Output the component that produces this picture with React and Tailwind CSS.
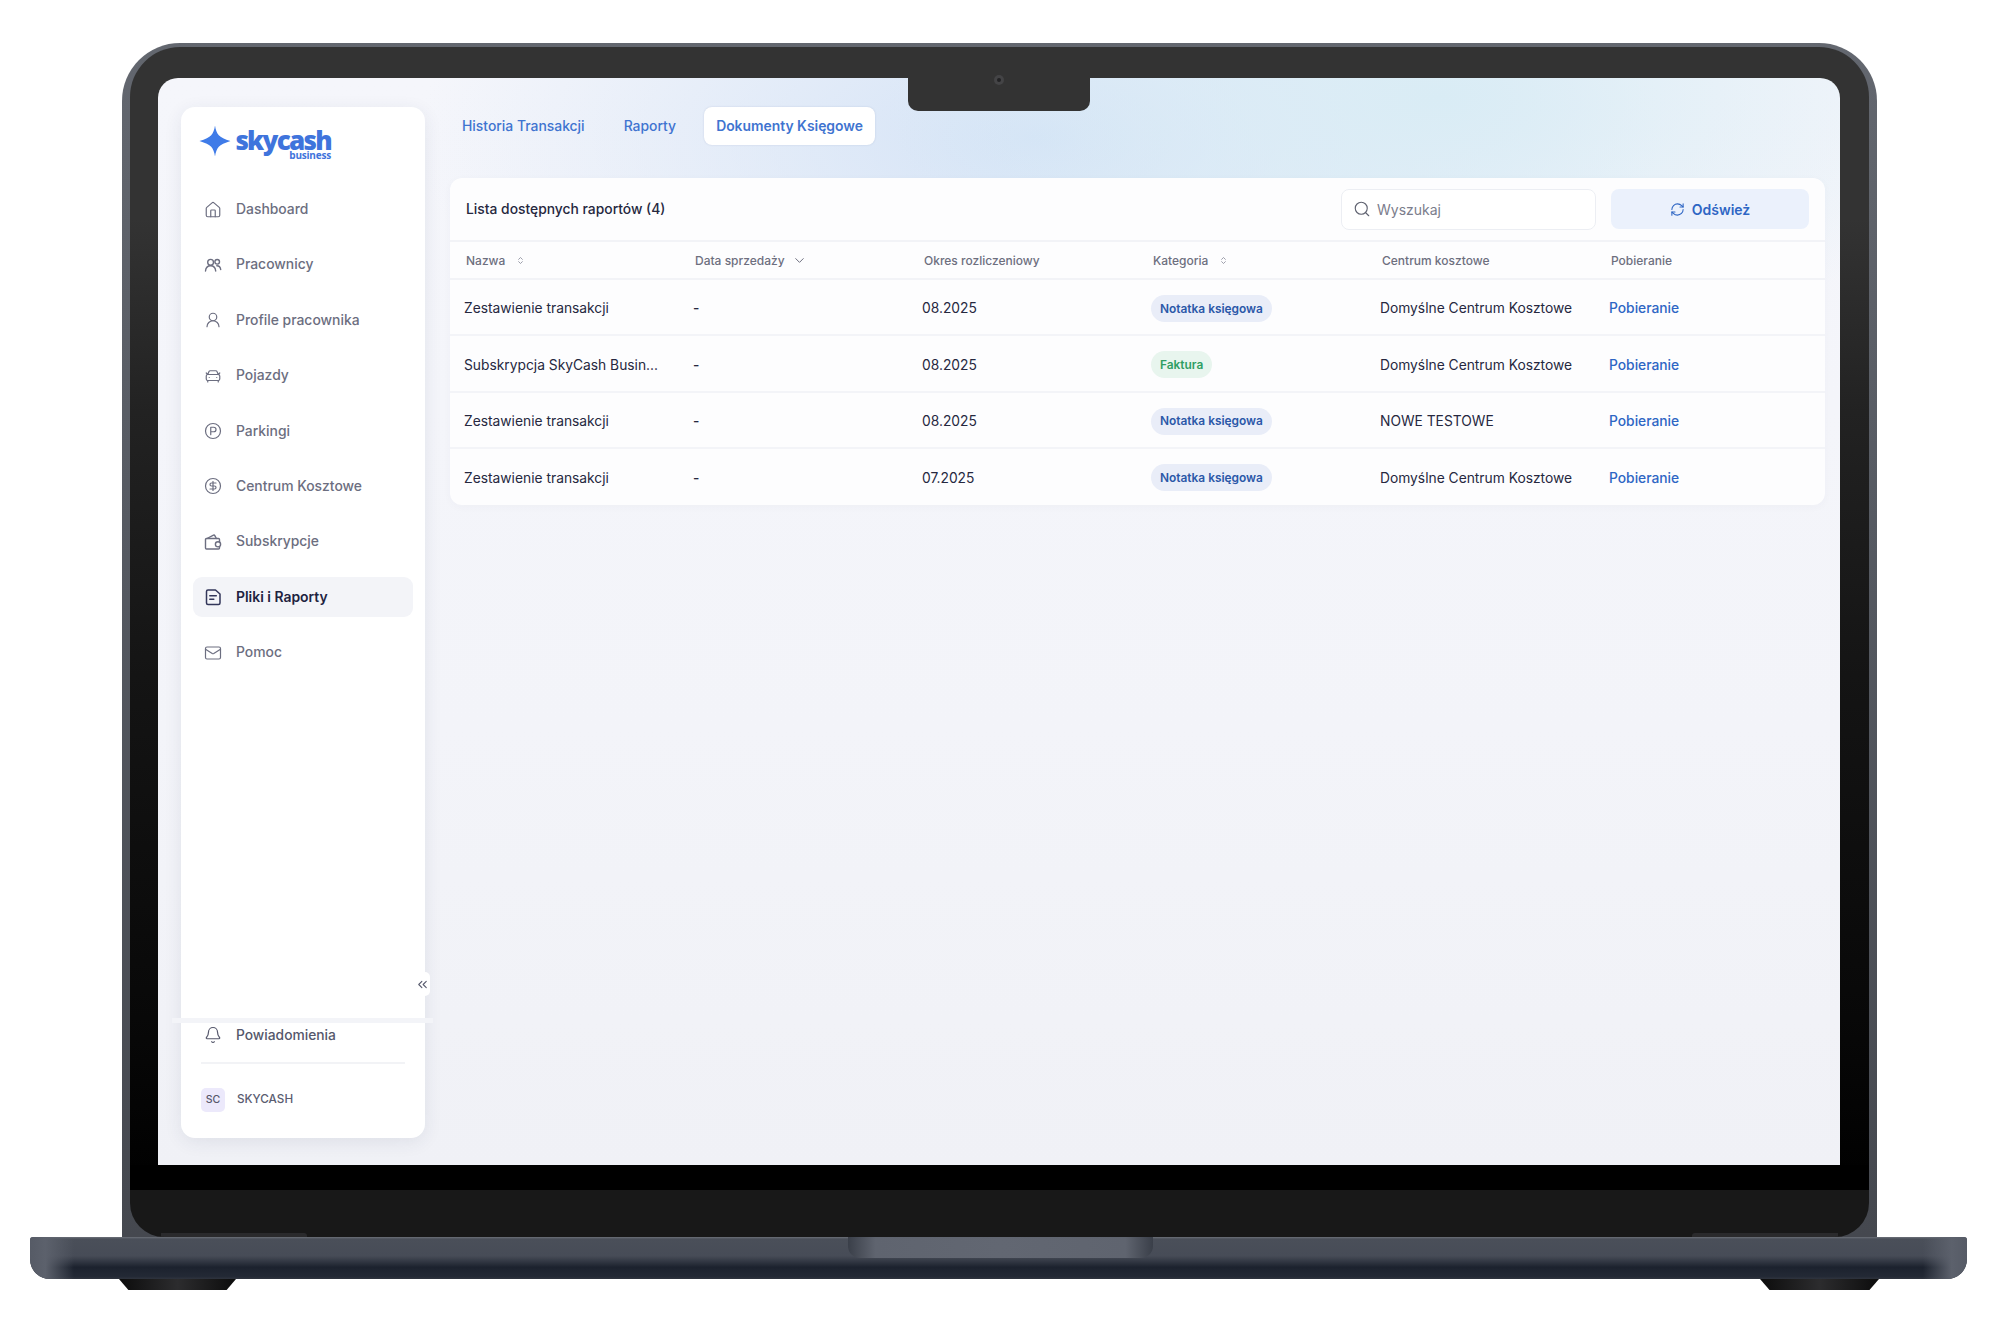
import React from "react";
import { House, UserRound, CarFront, CircleParking, CircleDollarSign, Mail, Bell, Search, RefreshCw, ChevronsUpDown, ChevronDown, ChevronsLeft } from "lucide-react";

const PeopleIcon = ({ className }) => (
  <svg viewBox="0 0 18 18" fill="none" stroke="currentColor" strokeWidth="1.4" strokeLinejoin="round" strokeLinecap="round" className={className}>
    <circle cx="6.600" cy="6.300" r="2.900" />
    <path d="M1.500 15c.3-3.300 2.300-5.300 5.100-5.300s4.800 2 5.100 5.300" />
    <circle cx="13.200" cy="5.800" r="2.300" />
    <path d="M12.800 9.700c2.200 0 3.600 1.500 3.900 3.800" />
  </svg>
);
const WalletIcon = ({ className }) => (
  <svg viewBox="0 0 18 18" fill="none" stroke="currentColor" strokeWidth="1.4" strokeLinejoin="round" strokeLinecap="round" className={className}>
    <path d="M15.500 9V6.500a1 1 0 0 0-1-1h-12a1 1 0 0 0-1 1v8.500a1 1 0 0 0 1 1h12a1 1 0 0 0 1-1v-1" />
    <path d="M3 5.500 9.500 2.200a1 1 0 0 1 1.300.4l1.600 2.900" />
    <circle cx="14" cy="11.300" r="2.600" />
  </svg>
);
const DocIcon = ({ className }) => (
  <svg viewBox="0 0 18 18" fill="none" stroke="currentColor" strokeWidth="1.5" strokeLinejoin="round" strokeLinecap="round" className={className}>
    <path d="M4 2h7.500L16 6v9a1.500 1.500 0 0 1-1.500 1.500h-10.500A1.500 1.500 0 0 1 2.500 15V3.500A1.500 1.500 0 0 1 4 2z" />
    <path d="M5.800 7.800h6.500M5.800 11.200h4" />
  </svg>
);

const nav = [
  ["Dashboard", House],
  ["Pracownicy", PeopleIcon],
  ["Profile pracownika", UserRound],
  ["Pojazdy", CarFront],
  ["Parkingi", CircleParking],
  ["Centrum Kosztowe", CircleDollarSign],
  ["Subskrypcje", WalletIcon],
  ["Pliki i Raporty", DocIcon, true],
  ["Pomoc", Mail],
];

const rows = [
  ["Zestawienie transakcji", "-", "08.2025", "n", "Domyślne Centrum Kosztowe"],
  ["Subskrypcja SkyCash Busin...", "-", "08.2025", "f", "Domyślne Centrum Kosztowe"],
  ["Zestawienie transakcji", "-", "08.2025", "n", "NOWE TESTOWE"],
  ["Zestawienie transakcji", "-", "07.2025", "n", "Domyślne Centrum Kosztowe"],
];

const Sort = () => <ChevronsUpDown className="w-[9px] h-[9px] text-[#7d8090] ml-[11px]" strokeWidth={2} />;

function Sidebar() {
  return (
    <aside className="relative w-[244px] h-[1031px] shrink-0 bg-white rounded-[14px] shadow-[0_4px_18px_rgba(40,50,90,0.09)] flex flex-col">
      <div className="h-[82.500px] pl-[19px] pt-[18px] flex items-start">
        <svg viewBox="0 0 32 32" className="w-[32px] h-[32px] -ml-[1px] text-[#3f7be8]" fill="currentColor">
          <path d="M16 0.500c.7 4.500 1.900 7.800 3.800 9.700C21.800 12.200 25.500 14.200 31.500 16c-6 1.800-9.700 3.800-11.700 5.800C17.900 23.700 16.700 27 16 31.500c-.7-4.500-1.900-7.800-3.800-9.700C10.200 19.800 6.500 17.800.5 16c6-1.800 9.700-3.800 11.700-5.800C14.100 8.300 15.300 5 16 .5z" />
        </svg>
        <div className="ml-[4px] w-[96px] flex flex-col items-end font-['Open_Sans',sans-serif] text-[#3f74dc]">
          <span className="text-[26px] leading-[20px] tracking-[-1.700px] mt-[5px] font-extrabold">skycash</span>
          <span className="text-[10px] leading-[6px] mt-[2px] tracking-[-0.2px] font-bold">business</span>
        </div>
      </div>
      <nav className="flex flex-col gap-[15.400px] px-[12px]">
        {nav.map(([label, Icon, active]) => (
          <div key={label} className={`h-[40px] pl-[11px] rounded-[9px] flex items-center ${active ? "bg-[#f3f4f8] text-[#20223f] font-semibold" : "text-[#6c6e80] font-medium"}`}>
            <Icon className={`w-[18px] h-[18px] shrink-0 ${active ? "text-[#33365a]" : "text-[#6c6e80]"}`} strokeWidth={1.6} />
            <span className="ml-[14px] text-[13.900px]">{label}</span>
          </div>
        ))}
      </nav>
      <button className="absolute left-[233px] top-[865px] w-[16px] h-[24px] bg-white rounded-r-[5px] flex items-center justify-center text-[#55586b]">
        <ChevronsLeft className="w-[15px] h-[15px]" strokeWidth={1.7} />
      </button>
      <div className="absolute -left-[9px] -right-[8px] top-[911px] h-[5px] bg-[#f3f4f8]" />
      <div className="mt-auto px-[20px] pb-[26px]">
        <div className="h-[42px] mb-[6px] pl-[3px] flex items-center text-[#55576b] font-medium">
          <Bell className="w-[18px] h-[18px] shrink-0" strokeWidth={1.6} />
          <span className="ml-[14px] text-[13.800px]">Powiadomienia</span>
        </div>
        <div className="h-[2px] bg-[#f2f3f6]" />
        <div className="mt-[24px] flex items-center">
          <div className="w-[24px] h-[24px] rounded-[5px] bg-[#ece9fb] flex items-center justify-center text-[10.500px] font-medium text-[#55576b]">SC</div>
          <span className="ml-[12px] text-[11.700px] font-medium text-[#5a5c70]">SKYCASH</span>
        </div>
      </div>
    </aside>
  );
}

function Table() {
  const cols = "grid grid-cols-[229px_229px_229px_229px_229px_1fr]";
  return (
    <section className="h-[327px] rounded-[12px] bg-[#fdfdfe] flex flex-col overflow-hidden shadow-[0_2px_8px_rgba(60,70,110,0.03)]">
      <div className="h-[64px] shrink-0 flex items-center pl-[16px] pr-[16px] border-b-[2px] border-[#f2f3f7]">
        <h2 className="pt-[1px] text-[13.850px] font-medium text-[#26283f]">Lista dostępnych raportów (4)</h2>
        <div className="ml-auto w-[255px] h-[41px] rounded-[8px] border border-[#eceef3] bg-white flex items-center pl-[11px]">
          <Search className="w-[18px] h-[18px] text-[#5f6270]" strokeWidth={1.5} />
          <span className="ml-[6px] text-[14px] text-[#7b7d8c]">Wyszukaj</span>
        </div>
        <button className="ml-[15px] w-[198px] h-[40px] rounded-[8px] bg-[#ebf1fc] flex items-center justify-center gap-[7px] text-[#2e66c4] text-[14px] font-semibold">
          <RefreshCw className="w-[15px] h-[15px]" strokeWidth={1.7} />
          Odśwież
        </button>
      </div>
      <div className={`${cols} h-[38px] shrink-0 items-center pl-[16px] pt-[1px] text-[12px] font-medium text-[#6d6f7e] border-b-[2px] border-[#f2f3f7]`}>
        <div className="flex items-center">Nazwa<Sort /></div>
        <div className="flex items-center">Data sprzedaży<ChevronDown className="w-[15px] h-[15px] ml-[7px] text-[#6d6f7e]" strokeWidth={1.6} /></div>
        <div>Okres rozliczeniowy</div>
        <div className="flex items-center">Kategoria<Sort /></div>
        <div>Centrum kosztowe</div>
        <div>Pobieranie</div>
      </div>
      {rows.map((r, i) => (
        <div key={i} className={`${cols} h-[56.250px] shrink-0 items-center pl-[14px] text-[13.800px] text-[#26283f] ${i < 3 ? "pt-[3px] border-b-[2px] border-[#f3f4f8]" : "pt-[2px]"}`}>
          <div>{r[0]}</div>
          <div className="font-medium">{r[1]}</div>
          <div>{r[2]}</div>
          <div>
            {r[3] === "n" ? (
              <span className="inline-flex items-center h-[27px] px-[9px] rounded-full bg-[#e9edf8] text-[#2b58a8] text-[11.900px] font-semibold">Notatka księgowa</span>
            ) : (
              <span className="inline-flex items-center h-[27px] px-[9px] rounded-full bg-[#e8f5ee] text-[#2f9e63] text-[11.900px] font-semibold">Faktura</span>
            )}
          </div>
          <div>{r[4]}</div>
          <div className="text-[#2e66c4] font-medium">Pobieranie</div>
        </div>
      ))}
    </section>
  );
}

function Main() {
  return (
    <main className="flex-1 ml-[25px] min-w-0">
      <div className="h-[71px]">
        <div className="flex items-center h-[38px] text-[13.900px] font-medium text-[#3f74d0]">
          <span className="ml-[12px]">Historia Transakcji</span>
          <span className="ml-[39px]">Raporty</span>
          <span className="ml-[28px] h-[38px] w-[171px] flex items-center justify-center bg-white rounded-[8px] shadow-[0_0_2px_rgba(60,80,130,0.18)] font-semibold">Dokumenty Księgowe</span>
        </div>
      </div>
      <Table />
    </main>
  );
}

export default function App() {
  return (
    <div className="w-[2000px] h-[1344px] bg-white overflow-hidden font-['Inter',sans-serif] pt-[43px]">
      {/* lid */}
      <div className="relative ml-[122px] w-[1755px] rounded-t-[58px] bg-[linear-gradient(#63676f,#565a62_40%,#45484f_100%)]">
        <div className="relative mx-[8px] pt-[4px]">
          <div className="rounded-t-[50px] bg-[linear-gradient(#333333,#333333_15%,#222222_32%,#141414_55%,#080808_85%,#000000_100%)] pt-[31px]">
            <div className="relative ml-[28px] mr-[29px] h-[1087px] rounded-t-[20px] overflow-hidden flex pl-[23px] pr-[15px] pt-[29px] bg-[radial-gradient(ellipse_560px_260px_at_1280px_20px,#d9ecf5_0%,rgba(217,236,245,0)_100%),radial-gradient(ellipse_620px_280px_at_880px_60px,#d4e3f6_0%,rgba(212,227,246,0)_100%),linear-gradient(#f5f6fb,#f3f4f9_60%,#f0f1f6)]">
              <Sidebar />
              <Main />
            </div>
            <div className="h-[25px] bg-black" />
          </div>
          <div className="relative h-[47px] rounded-b-[34px] bg-[#181818] overflow-hidden">
            <div className="absolute bottom-0 left-[31px] w-[146px] h-[4px] bg-[#2a2a2c] rounded-tr-[3px]" />
            <div className="absolute bottom-0 right-[31px] w-[146px] h-[4px] bg-[#2a2a2c] rounded-tl-[3px]" />
          </div>
        </div>
        {/* notch */}
        <div className="absolute left-[786px] top-[35px] w-[182px] h-[33px] bg-[#333333] rounded-b-[10px] flex justify-center">
          <div className="w-[10px] h-[10px] mt-[-3px] rounded-full bg-[#444446] flex items-center justify-center">
            <div className="w-[4px] h-[4px] rounded-full bg-[#222224]" />
          </div>
        </div>
      </div>
      {/* base */}
      <div className="relative ml-[30px] w-[1937px] h-[42px] rounded-t-[3px] rounded-b-[20px] overflow-hidden bg-[linear-gradient(#6d7179_0,#4a4f59_2px,#474c57_45%,#1c222e_72%,#232935_94%,#2f343e_100%)]">
        <div className="absolute left-0 top-0 bottom-0 w-[44px] bg-[linear-gradient(90deg,#565b66,#5c616c_35%,rgba(70,75,86,0))]" />
        <div className="absolute right-0 top-0 bottom-0 w-[44px] bg-[linear-gradient(270deg,#565b66,#5c616c_35%,rgba(70,75,86,0))]" />
        <div className="absolute left-[818px] top-0 w-[305px] h-[21px] rounded-b-[12px] bg-[linear-gradient(90deg,#3a3f49,#5f646f_9%,#626772_50%,#5f646f_91%,#3a3f49)]" />
      </div>
      {/* feet */}
      <div className="flex ml-[119px] w-[1760px] justify-between">
        <div className="w-[117px] h-[11px] bg-[linear-gradient(90deg,#0c0c0c,#2c2c2e_50%,#0c0c0c)] [clip-path:polygon(0_0,100%_0,92%_100%,8%_100%)]" />
        <div className="w-[119px] h-[11px] bg-[linear-gradient(90deg,#0c0c0c,#2c2c2e_50%,#0c0c0c)] [clip-path:polygon(0_0,100%_0,92%_100%,8%_100%)]" />
      </div>
    </div>
  );
}
